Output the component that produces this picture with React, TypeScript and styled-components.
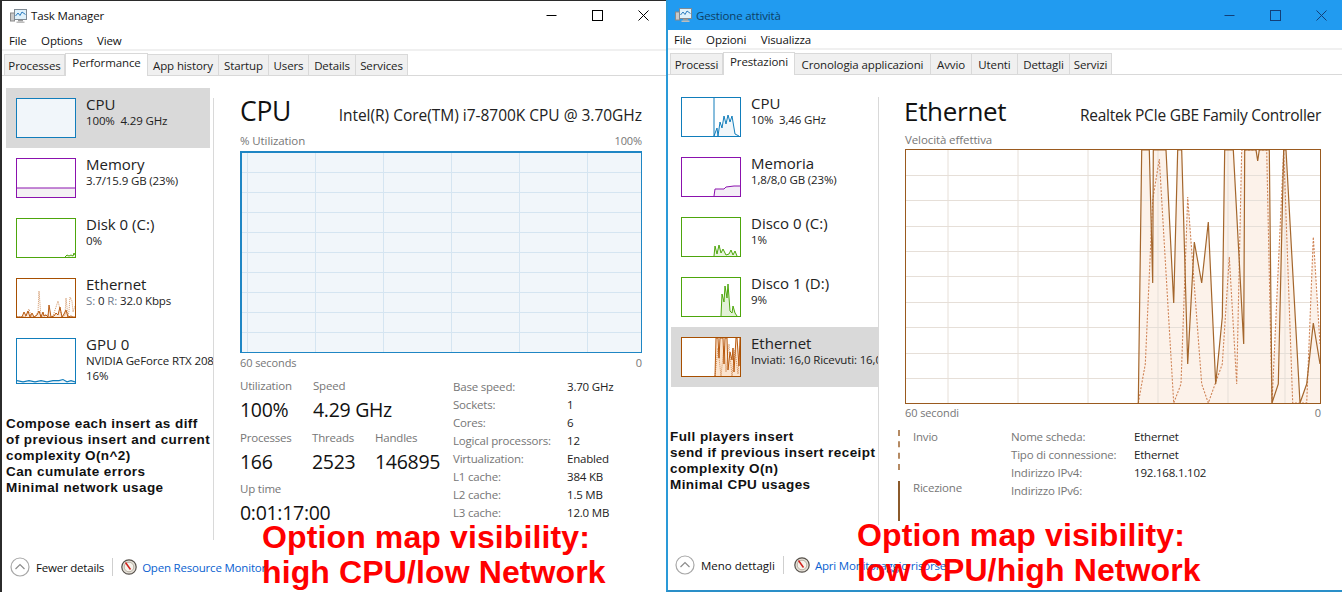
import React from 'react';
import styled, { createGlobalStyle } from 'styled-components';

const GlobalStyle = createGlobalStyle`
  html, body { margin: 0; padding: 0; background: #fff; }
  body { font-family: "Open Sans", "Liberation Sans", sans-serif; overflow: hidden; }
  * { box-sizing: border-box; }
`;

const Page = styled.div`
  display: flex;
  width: 1342px;
  height: 592px;
  overflow: hidden;
`;

const Window = styled.div<{ $w: number; $blue?: boolean }>`
  position: relative;
  flex: none;
  width: ${p => p.$w}px;
  height: 592px;
  display: flex;
  flex-direction: column;
  overflow: hidden;
  background: #fff;
  border-left: 2px solid ${p => (p.$blue ? '#2a9ad8' : '#2b2b2b')};
  border-top: ${p => (p.$blue ? '0' : '1px solid #2b2b2b')};
  border-bottom: ${p => (p.$blue ? '2px solid #2a8fc8' : '0')};
`;

const TitleBar = styled.div<{ $blue?: boolean }>`
  flex: none;
  height: ${p => (p.$blue ? 30 : 29)}px;
  display: flex;
  align-items: center;
  padding-left: ${p => (p.$blue ? 7 : 8)}px;
  background: ${p => (p.$blue ? '#219bf0' : '#fff')};
  color: ${p => (p.$blue ? '#0d3f66' : '#111')};
  font-size: 11.5px;
  letter-spacing: -0.15px;
`;

const AppIcon = styled.svg`
  width: 17px;
  height: 16px;
  margin-right: 4px;
  flex: none;
`;

const TitleText = styled.span`
  flex: 1;
`;

const WinButton = styled.div<{ $color: string }>`
  width: 46px;
  height: 100%;
  display: flex;
  align-items: center;
  justify-content: center;
  color: ${p => p.$color};
  &:last-child { margin-right: ${p => (p.$color === '#000' ? 0 : -2)}px; }
`;

const MenuBar = styled.div<{ $left: number; $h: number; $pad: number }>`
  flex: none;
  height: ${p => p.$h}px;
  display: flex;
  align-items: center;
  gap: 14.5px;
  padding: ${p => p.$pad}px 0 0 ${p => p.$left}px;
  font-size: 11.5px;
  letter-spacing: -0.15px;
  color: #111;
  border-bottom: 2px solid #f0f0f0;
`;

const TabStrip = styled.div<{ $left: number }>`
  flex: none;
  height: 25px;
  display: flex;
  align-items: flex-end;
  padding-left: ${p => p.$left}px;
  border-bottom: 1px solid #d9d9d9;
`;

const Tab = styled.div<{ $w: number; $active?: boolean }>`
  flex: none;
  width: ${p => p.$w}px;
  height: ${p => (p.$active ? 23 : 21)}px;
  margin-bottom: ${p => (p.$active ? -1 : 0)}px;
  display: flex;
  align-items: ${p => (p.$active ? 'flex-start' : 'center')};
  justify-content: center;
  padding-top: ${p => (p.$active ? 1 : 0)}px;
  white-space: nowrap;
  font-size: 11.5px;
  letter-spacing: -0.12px;
  color: #222;
  background: ${p => (p.$active ? '#fff' : '#f0f0f0')};
  border: 1px solid #d9d9d9;
  border-left-width: ${p => (p.$active ? 1 : 0)}px;
  border-bottom-width: 0;
  &:first-child { border-left-width: 1px; }
`;

const Body = styled.div`
  flex: 1;
  min-height: 0;
  display: flex;
`;

const Sidebar = styled.div<{ $w: number; $left: number; $itemW: number }>`
  flex: none;
  width: ${p => p.$w}px;
  padding: 12px 0 0 ${p => p.$left}px;
  overflow: hidden;
  --item-w: ${p => p.$itemW}px;
`;

const Item = styled.div<{ $selected?: boolean; $h?: number }>`
  width: var(--item-w);
  height: ${p => p.$h ?? 60}px;
  display: flex;
  align-items: flex-start;
  padding: 10px 0 0 10px;
  gap: 10px;
  background: ${p => (p.$selected ? '#d9d9d9' : 'transparent')};
  white-space: nowrap;
`;

const Thumb = styled.div<{ $color: string; $h?: number }>`
  flex: none;
  width: 60px;
  height: ${p => p.$h ?? 40}px;
  border: 1px solid ${p => p.$color};
  background: #fff;
`;

const ThumbSvg = styled.svg`
  display: block;
  width: 100%;
  height: 100%;
`;

const ItemText = styled.div`
  margin-top: -2px;
`;

const ItemName = styled.div`
  font-size: 15px;
  line-height: 17px;
  color: #222;
`;

const ItemSub = styled.div`
  font-size: 11.5px;
  line-height: 15px;
  letter-spacing: -0.13px;
  color: #222;
  b { font-weight: 400; color: #6d7a8c; }
`;

const Note = styled.div<{ $top: number; $left: number }>`
  margin: ${p => p.$top}px 0 0 ${p => p.$left}px;
  font-family: "Liberation Sans", Arial, sans-serif;
  font-weight: 700;
  font-size: 13.5px;
  line-height: 16px;
  letter-spacing: 0.43px;
  color: #111;
  white-space: nowrap;
`;

const Divider = styled.div<{ $top: number; $bottom: number }>`
  flex: none;
  width: 1px;
  margin: ${p => p.$top}px 0 ${p => p.$bottom}px;
  background: #d9d9d9;
`;

const Main = styled.div<{ $w: number; $left: number; $top: number }>`
  flex: none;
  width: ${p => p.$w}px;
  margin-left: ${p => p.$left}px;
  padding-top: ${p => p.$top}px;
`;

const HeadRow = styled.div<{ $h: number }>`
  display: flex;
  justify-content: space-between;
  align-items: baseline;
  height: ${p => p.$h}px;
  white-space: nowrap;
`;

const BigTitle = styled.div<{ $size: number; $nudge: number }>`
  margin-left: ${p => p.$nudge}px;
  font-size: ${p => p.$size}px;
  line-height: 37px;
  letter-spacing: -0.3px;
  color: #111;
`;

const Model = styled.div<{ $ls: number }>`
  font-size: 15.5px;
  letter-spacing: ${p => p.$ls}px;
  color: #222;
`;

const AxisRow = styled.div<{ $size?: number }>`
  display: flex;
  justify-content: space-between;
  height: 16px;
  line-height: 16px;
  font-size: ${p => p.$size ?? 11.5}px;
  letter-spacing: -0.1px;
  color: #767676;
  span:last-child:not(:first-child) { font-size: 11px; }
`;

const ChartFrame = styled.div<{ $h: number; $heavy?: boolean; $color: string; $bg: string }>`
  height: ${p => p.$h}px;
  border: 1px solid ${p => p.$color};
  border-top-width: ${p => (p.$heavy ? 2 : 1)}px;
  border-left-width: ${p => (p.$heavy ? 2 : 1)}px;
  background: ${p => p.$bg};
  margin: ${p => (p.$heavy ? 2 : 1)}px 0;
`;

const StatsArea = styled.div<{ $top: number }>`
  display: flex;
  margin-top: ${p => p.$top}px;
`;

const StatCol = styled.div`
  flex: none;
  width: 213px;
`;

const StatRow = styled.div`
  display: flex;
  height: 51.5px;
`;

const Stat = styled.div<{ $w?: number }>`
  flex: none;
  width: ${p => (p.$w ? `${p.$w}px` : 'auto')};
`;

const StatLabel = styled.div`
  font-size: 11.5px;
  line-height: 16px;
  letter-spacing: -0.2px;
  color: #767676;
`;

const StatValue = styled.div`
  font-size: 19.5px;
  line-height: 32px;
  letter-spacing: -0.3px;
  color: #111;
`;

const InfoTable = styled.div<{ $labelW: number; $shift: number }>`
  display: grid;
  grid-template-columns: ${p => p.$labelW}px auto;
  grid-auto-rows: 18px;
  align-items: center;
  align-self: flex-start;
  margin-top: ${p => p.$shift}px;
  font-size: 11.5px;
  letter-spacing: -0.2px;
  white-space: nowrap;
`;

const InfoLabel = styled.div`
  color: #767676;
`;

const InfoValue = styled.div`
  color: #222;
`;

const Legend = styled.div`
  flex: none;
  width: 113px;
  margin-left: -7px;
  display: flex;
  flex-direction: column;
  gap: 11px;
`;

const LegendItem = styled.div<{ $dashed?: boolean }>`
  height: 40px;
  padding-left: 13px;
  border-left: 2px ${p => (p.$dashed ? 'dashed #b58a63' : 'solid #8b5a2b')};
  font-size: 11.5px;
  line-height: 14px;
  letter-spacing: -0.2px;
  color: #767676;
`;

const Footer = styled.div<{ $left: number }>`
  flex: none;
  height: 50px;
  display: flex;
  align-items: center;
  padding: 0 0 0 ${p => p.$left}px;
  font-size: 11.5px;
  letter-spacing: -0.2px;
  color: #111;
  white-space: nowrap;
`;

const FooterIcon = styled.svg`
  flex: none;
`;

const FooterLabel = styled.span<{ $ls: number }>`
  margin-left: 6px;
  letter-spacing: ${p => p.$ls}px;
`;

const FooterSep = styled.div<{ $mx: number }>`
  width: 1px;
  height: 18px;
  margin: 0 ${p => p.$mx}px 0 8px;
  background: #cfcfcf;
`;

const ResourceLink = styled.span`
  margin-left: 5px;
  color: #0a5fd0;
`;

const Annotation = styled.div<{ $left: number; $top: number }>`
  position: absolute;
  left: ${p => p.$left}px;
  top: ${p => p.$top}px;
  font-family: "Liberation Sans", Arial, sans-serif;
  font-weight: 700;
  font-size: 32px;
  line-height: 35px;
  letter-spacing: 0.12px;
  color: #ff0000;
  white-space: nowrap;
`;

// --- drawings ---

const TaskIcon = () => (
  <AppIcon viewBox="0 0 17 16">
    <rect x="0.5" y="5" width="4" height="8" fill="#c9c9c9" stroke="#8a8a8a" />
    <rect x="4.5" y="1.5" width="12" height="10" fill="#dff1fb" stroke="#7f8a94" />
    <polyline points="5.5,8 8,5 10,7.5 12,4 15.5,6.5" fill="none" stroke="#2b7cc0" strokeWidth="1" />
    <rect x="8" y="12" width="5" height="1.5" fill="#9a9a9a" />
    <rect x="6.5" y="13.5" width="8" height="1.5" fill="#bdbdbd" />
  </AppIcon>
);

const WinControls = ({ color }: { color: string }) => (
  <>
    <WinButton $color={color}>
      <svg width="11" height="11" viewBox="0 0 11 11"><line x1="0.5" y1="5.5" x2="10.5" y2="5.5" stroke="currentColor" /></svg>
    </WinButton>
    <WinButton $color={color}>
      <svg width="11" height="11" viewBox="0 0 11 11"><rect x="0.5" y="0.5" width="10" height="10" fill="none" stroke="currentColor" /></svg>
    </WinButton>
    <WinButton $color={color}>
      <svg width="11" height="11" viewBox="0 0 11 11"><path d="M0.5 0.5 L10.5 10.5 M10.5 0.5 L0.5 10.5" fill="none" stroke="currentColor" /></svg>
    </WinButton>
  </>
);

const UpIcon = () => (
  <FooterIcon width="20" height="20" viewBox="0 0 20 20">
    <circle cx="10" cy="10" r="9" fill="#fff" stroke="#a8a8a8" strokeWidth="1.2" />
    <polyline points="5.5,12 10,7.5 14.5,12" fill="none" stroke="#8c8c8c" strokeWidth="1.2" />
  </FooterIcon>
);

const GaugeIcon = () => (
  <FooterIcon width="16" height="16" viewBox="0 0 16 16">
    <circle cx="8" cy="8" r="7.2" fill="#e4dfd6" stroke="#55504a" strokeWidth="1.2" />
    <circle cx="8" cy="8" r="4.8" fill="#f6f3ec" stroke="#a9a294" strokeWidth="0.8" />
    <line x1="4.5" y1="3.5" x2="9.5" y2="10.5" stroke="#d0201c" strokeWidth="1.5" />
  </FooterIcon>
);

type Graph = { line: string; fill: string; stroke: string; dashed?: string };

const MiniGraph = ({ line, fill, stroke, dashed }: Graph) => (
  <ThumbSvg viewBox="0 0 58 38" preserveAspectRatio="none">
    <polygon points={`${line.split(' ')[0].split(',')[0]},38 ${line} 58,38`} fill={fill} />
    {dashed && <polyline points={dashed} fill="none" stroke={stroke} strokeWidth="0.8" strokeDasharray="1 1" opacity="0.8" />}
    <polyline points={line} fill="none" stroke={stroke} strokeWidth="1" />
  </ThumbSvg>
);

const grid = (xs: number[], ys: number[], w: number, h: number, color: string) => (
  <>
    {xs.map(x => <line key={`v${x}`} x1={x} y1={0} x2={x} y2={h} stroke={color} />)}
    {ys.map(y => <line key={`h${y}`} x1={0} y1={y} x2={w} y2={y} stroke={color} />)}
  </>
);

const ethSolid = '232.3,253 235.7,0 243.3,0 246.7,133 247.3,0 260,0 267.7,153 271.7,0 275.7,0 281.7,214 288.3,92 295.7,133 302.3,72 309.7,234 316.3,167 318.7,0 327.3,0 337.7,194 338.7,0 350,0 351.7,11 353.3,0 363.3,0 366,253 372.3,234 377.7,0 380,0 394,253 400.7,234 407.3,173 414,214';
const ethDashed = '232.3,253 239.3,214 246.7,50 253.3,9 267.7,253 275,234 281.7,47 295.7,234 302.3,253 316.3,214 323.3,107 330.7,234 335.7,0 360.7,0 366,253 377.7,0 386.7,253 400.7,253 407.3,87 414,194';

const tabsLeft: [string, number, boolean?][] = [
  ['Processes', 61], ['Performance', 83, true], ['App history', 71], ['Startup', 50], ['Users', 40], ['Details', 47], ['Services', 52],
];
const tabsRight: [string, number, boolean?][] = [
  ['Processi', 53], ['Prestazioni', 72, true], ['Cronologia applicazioni', 136], ['Avvio', 41], ['Utenti', 46], ['Dettagli', 52], ['Servizi', 42],
];

const cpuInfo = [
  ['Base speed:', '3.70 GHz'], ['Sockets:', '1'], ['Cores:', '6'], ['Logical processors:', '12'],
  ['Virtualization:', 'Enabled'], ['L1 cache:', '384 KB'], ['L2 cache:', '1.5 MB'], ['L3 cache:', '12.0 MB'],
];
const netInfo = [
  ['Nome scheda:', 'Ethernet'], ['Tipo di connessione:', 'Ethernet'], ['Indirizzo IPv4:', '192.168.1.102'], ['Indirizzo IPv6:', ''],
];

const App: React.FC = () => {
  return (
    <Page>
      <GlobalStyle />

      <Window $w={666}>
        <TitleBar>
          <TaskIcon />
          <TitleText>Task Manager</TitleText>
          <WinControls color="#000" />
        </TitleBar>
        <MenuBar $left={7} $h={21} $pad={2}>
          <span>File</span><span>Options</span><span>View</span>
        </MenuBar>
        <TabStrip $left={2}>
          {tabsLeft.map(([name, w, active]) => <Tab key={name} $w={w} $active={active}>{name}</Tab>)}
        </TabStrip>
        <Body>
          <Sidebar $w={211} $left={4} $itemW={204}>
            <Item $selected>
              <Thumb $color="#117dbb"><ThumbSvg viewBox="0 0 58 38"><rect width="58" height="38" fill="#f1f6fa" /></ThumbSvg></Thumb>
              <ItemText><ItemName>CPU</ItemName><ItemSub>100%&nbsp; 4.29 GHz</ItemSub></ItemText>
            </Item>
            <Item>
              <Thumb $color="#8b12ae"><MiniGraph line="0,29 58,29" fill="#f4f2f4" stroke="#8b12ae" /></Thumb>
              <ItemText><ItemName>Memory</ItemName><ItemSub>3.7/15.9 GB (23%)</ItemSub></ItemText>
            </Item>
            <Item>
              <Thumb $color="#4da60c"><MiniGraph line="48,38 50,36 52,37 54,36 56,37 57,34 58,36" fill="#eff7e7" stroke="#4da60c" /></Thumb>
              <ItemText><ItemName>Disk 0 (C:)</ItemName><ItemSub>0%</ItemSub></ItemText>
            </Item>
            <Item>
              <Thumb $color="#a74f01">
                <MiniGraph
                  line="0,38 5,38 7,33 9,37 11,32 13,38 15,34 17,38 20,36 22,32 24,38 26,33 27,37 29,36 31,38 32,26 34,38 37,37 39,34 41,36 43,28 45,38 47,35 49,31 51,38 54,37 56,38 58,38"
                  dashed="0,38 8,38 10,34 12,30 14,37 18,38 21,33 22,12 24,38 28,36 31,36 33,38 36,37 41,22 45,38 48,36 49,19 51,38 52,32 53,18 55,22 56,33 58,27"
                  fill="#fbe9db"
                  stroke="#b8590f"
                />
              </Thumb>
              <ItemText><ItemName>Ethernet</ItemName><ItemSub><b>S:</b> 0 <b>R:</b> 32.0 Kbps</ItemSub></ItemText>
            </Item>
            <Item $h={74}>
              <Thumb $color="#117dbb" $h={46}>
                <MiniGraph line="0,36 6,37 12,36 18,37 24,36 30,37 36,36 42,36 46,35 50,37 54,36 58,37" fill="#f1f6fa" stroke="#117dbb" />
              </Thumb>
              <ItemText><ItemName>GPU 0</ItemName><ItemSub>NVIDIA GeForce RTX 2080</ItemSub><ItemSub>16%</ItemSub></ItemText>
            </Item>
            <Note $top={14} $left={0}>
              Compose each insert as diff<br />
              of previous insert and current<br />
              complexity O(n^2)<br />
              Can cumulate errors<br />
              Minimal network usage
            </Note>
          </Sidebar>
          <Divider $top={22} $bottom={2} />
          <Main $w={402} $left={26} $top={17}>
            <HeadRow $h={40}>
              <BigTitle $size={26.5} $nudge={0}>CPU</BigTitle>
              <Model $ls={-0.02}>Intel(R) Core(TM) i7-8700K CPU @ 3.70GHz</Model>
            </HeadRow>
            <AxisRow><span>% Utilization</span><span>100%</span></AxisRow>
            <ChartFrame $h={202} $heavy $color="#1f86c4" $bg="#f1f6fa">
              <ThumbSvg viewBox="0 0 399 199" preserveAspectRatio="none">
                {grid([5.5, 73.5, 141.5, 209.5, 277.5, 345.5], [19.5, 39.5, 59.5, 79.5, 99.5, 119.5, 139.5, 159.5, 179.5], 399, 199, '#d5e5f1')}
              </ThumbSvg>
            </ChartFrame>
            <AxisRow $size={11}><span>60 seconds</span><span>0</span></AxisRow>
            <StatsArea $top={7}>
              <StatCol>
                <StatRow>
                  <Stat $w={73}><StatLabel>Utilization</StatLabel><StatValue>100%</StatValue></Stat>
                  <Stat><StatLabel>Speed</StatLabel><StatValue>4.29 GHz</StatValue></Stat>
                </StatRow>
                <StatRow>
                  <Stat $w={72}><StatLabel>Processes</StatLabel><StatValue>166</StatValue></Stat>
                  <Stat $w={63}><StatLabel>Threads</StatLabel><StatValue>2523</StatValue></Stat>
                  <Stat><StatLabel>Handles</StatLabel><StatValue>146895</StatValue></Stat>
                </StatRow>
                <StatRow>
                  <Stat><StatLabel>Up time</StatLabel><StatValue>0:01:17:00</StatValue></Stat>
                </StatRow>
              </StatCol>
              <InfoTable $labelW={114} $shift={-1}>
                {cpuInfo.map(([k, v]) => (
                  <React.Fragment key={k}><InfoLabel>{k}</InfoLabel><InfoValue>{v}</InfoValue></React.Fragment>
                ))}
              </InfoTable>
            </StatsArea>
          </Main>
        </Body>
        <Footer $left={8}>
          <UpIcon />
          <FooterLabel $ls={-0.2}>Fewer details</FooterLabel>
          <FooterSep $mx={8} />
          <GaugeIcon />
          <ResourceLink>Open Resource Monitor</ResourceLink>
        </Footer>
        <Annotation $left={260} $top={519}>
          Option map visibility:<br />
          high CPU/low Network
        </Annotation>
      </Window>

      <Window $w={676} $blue>
        <TitleBar $blue>
          <TaskIcon />
          <TitleText>Gestione attività</TitleText>
          <WinControls color="#123f78" />
        </TitleBar>
        <MenuBar $left={6} $h={20} $pad={0}>
          <span>File</span><span>Opzioni</span><span>Visualizza</span>
        </MenuBar>
        <TabStrip $left={2}>
          {tabsRight.map(([name, w, active]) => <Tab key={name} $w={w} $active={active}>{name}</Tab>)}
        </TabStrip>
        <Body>
          <Sidebar $w={210} $left={3} $itemW={207}>
            <Item>
              <Thumb $color="#117dbb">
                <MiniGraph line="32,0 32,38 35,30 36,38 38,24 40,30 42,18 44,26 46,17 48,24 50,18 53,36 57,38" fill="#f1f6fa" stroke="#117dbb" />
              </Thumb>
              <ItemText><ItemName>CPU</ItemName><ItemSub>10%&nbsp; 3,46 GHz</ItemSub></ItemText>
            </Item>
            <Item>
              <Thumb $color="#8b12ae"><MiniGraph line="32,38 33,31 42,31 44,29 52,28 58,28" fill="#f4eef7" stroke="#8b12ae" /></Thumb>
              <ItemText><ItemName>Memoria</ItemName><ItemSub>1,8/8,0 GB (23%)</ItemSub></ItemText>
            </Item>
            <Item>
              <Thumb $color="#4da60c">
                <MiniGraph line="32,38 33,28 35,36 37,27 39,35 41,31 44,37 47,36 49,32 51,37 53,33 55,38" fill="#e9f4df" stroke="#4da60c" />
              </Thumb>
              <ItemText><ItemName>Disco 0 (C:)</ItemName><ItemSub>1%</ItemSub></ItemText>
            </Item>
            <Item>
              <Thumb $color="#4da60c">
                <MiniGraph line="39,38 40,16 42,24 43,8 45,20 46,6 48,33 50,35 51,28 53,35 55,38" fill="#e3f1d6" stroke="#4da60c" />
              </Thumb>
              <ItemText><ItemName>Disco 1 (D:)</ItemName><ItemSub>9%</ItemSub></ItemText>
            </Item>
            <Item $selected>
              <Thumb $color="#a74f01">
                <MiniGraph
                  line="33,38 34,0 36,0 37,20 38,0 41,0 42,26 43,0 45,0 46,32 48,14 50,22 51,10 52,34 54,0 55,0 57,28 58,0"
                  dashed="33,38 36,10 39,38 42,8 44,34 47,6 50,38 53,12 56,36 58,8"
                  fill="#fbe4cf"
                  stroke="#b8590f"
                />
              </Thumb>
              <ItemText><ItemName>Ethernet</ItemName><ItemSub>Inviati: 16,0 Ricevuti: 16,0 Kbps</ItemSub></ItemText>
            </Item>
            <Note $top={42} $left={-1}>
              Full players insert<br />
              send if previous insert receipt<br />
              complexity O(n)<br />
              Minimal CPU usages
            </Note>
          </Sidebar>
          <Divider $top={22} $bottom={15} />
          <Main $w={416} $left={26} $top={18}>
            <HeadRow $h={39}>
              <BigTitle $size={26} $nudge={-1}>Ethernet</BigTitle>
              <Model $ls={-0.28}>Realtek PCIe GBE Family Controller</Model>
            </HeadRow>
            <AxisRow><span>Velocità effettiva</span></AxisRow>
            <ChartFrame $h={255} $color="#9a5a1f" $bg="#fff">
              <ThumbSvg viewBox="0 0 414 253" preserveAspectRatio="none">
                <polygon points={`${ethDashed} 414,253`} fill="#fcf2ea" />
                <polygon points={`${ethSolid} 414,253`} fill="#fcf2ea" />
                {grid([42, 112, 182, 252, 322, 379], [25.5, 50.5, 76.5, 101.5, 126.5, 152.5, 177.5, 203.5, 228.5], 414, 253, '#e6dfd8')}
                <polyline points={ethDashed} fill="none" stroke="#cf8355" strokeWidth="1.1" strokeDasharray="2 1.5" />
                <polyline points={ethSolid} fill="none" stroke="#a4662c" strokeWidth="1.2" />
              </ThumbSvg>
            </ChartFrame>
            <AxisRow $size={11}><span>60 secondi</span><span>0</span></AxisRow>
            <StatsArea $top={9}>
              <Legend>
                <LegendItem $dashed>Invio</LegendItem>
                <LegendItem>Ricezione</LegendItem>
              </Legend>
              <InfoTable $labelW={123} $shift={-3}>
                {netInfo.map(([k, v]) => (
                  <React.Fragment key={k}><InfoLabel>{k}</InfoLabel><InfoValue>{v}</InfoValue></React.Fragment>
                ))}
              </InfoTable>
            </StatsArea>
          </Main>
        </Body>
        <Footer $left={7}>
          <UpIcon />
          <FooterLabel $ls={0}>Meno dettagli</FooterLabel>
          <FooterSep $mx={10} />
          <GaugeIcon />
          <ResourceLink>Apri Monitoraggio risorse</ResourceLink>
        </Footer>
        <Annotation $left={189} $top={518}>
          Option map visibility:<br />
          low CPU/high Network
        </Annotation>
      </Window>
    </Page>
  );
};

export default App;
